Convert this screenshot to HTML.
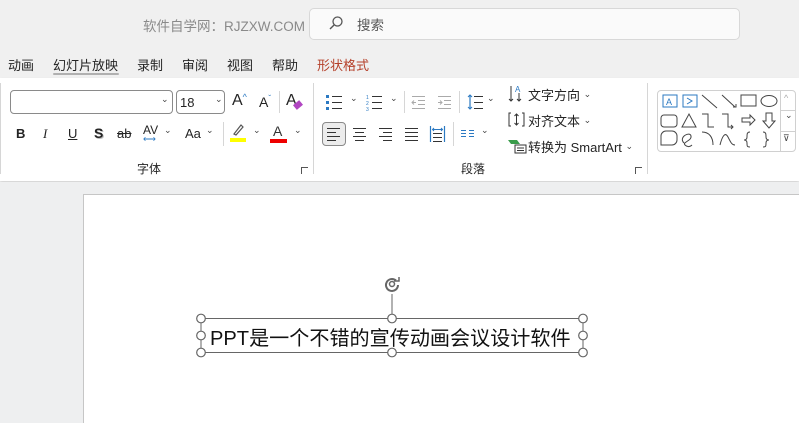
<!DOCTYPE html>
<html><head><meta charset="utf-8"><style>
*{margin:0;padding:0;box-sizing:border-box}
html,body{width:799px;height:423px;overflow:hidden}
body{background:#f0f0f0;font-family:"Liberation Sans","Noto Sans CJK SC",sans-serif;position:relative;color:#242424}
.a{position:absolute;white-space:nowrap}
.t{font-size:13px}
.sep{position:absolute;width:1px;background:#d6d6d6}
.chev{font-size:9px;color:#444;margin-top:-3px}
span.chev{position:relative;top:-3px}
</style></head><body>
<div class="a" style="left:143px;top:15px;font-size:13.5px;color:#8a8a8a">软件自学网：RJZXW.COM</div>
<div class="a" style="left:309px;top:8px;width:431px;height:32px;background:#fafafa;border:1px solid #d8d8d8;border-radius:5px"></div>
<svg class="a" style="left:328px;top:15px" width="16" height="16"><circle cx="9.5" cy="6.5" r="4.5" fill="none" stroke="#555" stroke-width="1.3"/><line x1="6.3" y1="9.7" x2="2" y2="14" stroke="#555" stroke-width="1.4"/></svg>
<div class="a" style="left:357px;top:14px;font-size:13.5px;color:#555">搜索</div>

<div class="a t" style="left:8px;top:55px">动画</div>
<div class="a t" style="left:53px;top:55px">幻灯片放映</div>
<div class="a" style="left:53px;top:73px;width:66px;height:2px;background:#b0b0b0;border-radius:1px"></div>
<div class="a t" style="left:137px;top:55px">录制</div>
<div class="a t" style="left:182px;top:55px">审阅</div>
<div class="a t" style="left:227px;top:55px">视图</div>
<div class="a t" style="left:272px;top:55px">帮助</div>
<div class="a t" style="left:317px;top:55px;color:#b5402a">形状格式</div>

<div class="a" style="left:0;top:78px;width:799px;height:103px;background:#fff;box-shadow:0 2px 3px rgba(0,0,0,0.12)"></div>
<div class="sep" style="left:313px;top:83px;height:91px"></div>
<div class="sep" style="left:0px;top:83px;height:91px"></div>
<div class="sep" style="left:647px;top:83px;height:91px"></div>

<div class="a" style="left:10px;top:90px;width:163px;height:24px;border:1px solid #8a8a8a;border-radius:4px"></div>
<div class="a chev" style="left:161px;top:97px">⌄</div>
<div class="a" style="left:176px;top:90px;width:49px;height:24px;border:1px solid #8a8a8a;border-radius:4px;font-size:13px;padding:4px 0 0 3px">18</div>
<div class="a chev" style="left:215px;top:97px">⌄</div>
<div class="a" style="left:232px;top:92px;font-size:16px">A<span style="font-size:9px;vertical-align:top;color:#2b79c2">^</span></div>
<div class="a" style="left:259px;top:94px;font-size:14px">A<span style="font-size:8px;vertical-align:top;color:#2b79c2">ˇ</span></div>
<div class="sep" style="left:279px;top:91px;height:22px"></div>
<div class="a" style="left:286px;top:92px;font-size:16px">A</div>
<div class="a" style="left:294px;top:102px;width:8px;height:6px;background:#b146c2;transform:rotate(-40deg)"></div>

<div class="a" style="left:16px;top:126px;font-size:13px;font-weight:bold">B</div>
<div class="a" style="left:43px;top:126px;font-size:13px;font-style:italic;font-family:'Liberation Serif',serif">I</div>
<div class="a" style="left:68px;top:126px;font-size:13px;text-decoration:underline">U</div>
<div class="a" style="left:94px;top:125px;font-size:14px;font-weight:bold;text-shadow:1px 1px #bbb">S</div>
<div class="a" style="left:117px;top:126px;font-size:13px;text-decoration:line-through">ab</div>
<div class="a" style="left:143px;top:123px;font-size:12px">AV</div>
<div class="a" style="left:143px;top:134px;font-size:9px;color:#2b79c2">⟷</div>
<div class="a chev" style="left:164px;top:128px">⌄</div>
<div class="a" style="left:185px;top:126px;font-size:13px">Aa</div>
<div class="a chev" style="left:206px;top:128px">⌄</div>
<div class="sep" style="left:223px;top:122px;height:24px"></div>
<svg class="a" style="left:230px;top:122px" width="16" height="20"><path d="M4 12 L11 3 L13 5 L6 13 Z" fill="none" stroke="#555" stroke-width="1.2"/><rect x="0" y="16" width="16" height="4" fill="#ffff00"/></svg>
<div class="a chev" style="left:253px;top:128px">⌄</div>
<div class="a" style="left:273px;top:123px;font-size:14px;color:#333">A</div>
<div class="a" style="left:270px;top:139px;width:17px;height:4px;background:#e00"></div>
<div class="a chev" style="left:294px;top:128px">⌄</div>
<div class="a" style="left:137px;top:160px;font-size:12px">字体</div>
<div class="a" style="left:301px;top:167px;width:7px;height:7px;border-left:1px solid #555;border-top:1px solid #555"></div>

<svg class="a" style="left:325px;top:93px" width="90" height="18">
<rect x="1" y="2" width="3" height="3" fill="#2b79c2"/><rect x="1" y="8" width="3" height="3" fill="#2b79c2"/><rect x="1" y="14" width="3" height="3" fill="#2b79c2"/>
<path d="M7 3.5h10M7 9.5h10M7 15.5h10" stroke="#333" stroke-width="1"/>
<text x="41" y="6" font-size="5" fill="#2b79c2">1</text><text x="41" y="12" font-size="5" fill="#2b79c2">2</text><text x="41" y="18" font-size="5" fill="#2b79c2">3</text>
<path d="M47 3.5h10M47 9.5h10M47 15.5h10" stroke="#333" stroke-width="1"/>
</svg>
<div class="a chev" style="left:350px;top:96px">⌄</div>
<div class="a chev" style="left:390px;top:96px">⌄</div>
<div class="sep" style="left:404px;top:91px;height:22px"></div>
<svg class="a" style="left:411px;top:93px" width="90" height="18">
<path d="M1 3.5h13M7 7.5h7M7 11.5h7M1 15.5h13M5 9.5H1M3 7.5l-2 2 2 2" stroke="#aaa" stroke-width="1" fill="none"/>
<path d="M27 3.5h13M33 7.5h7M33 11.5h7M27 15.5h13M27 9.5h4M29 7.5l2 2-2 2" stroke="#aaa" stroke-width="1" fill="none"/>
<path d="M59 2v14" stroke="#2b79c2" stroke-width="1.2"/><path d="M57 4l2-2 2 2M57 14l2 2 2-2" stroke="#2b79c2" fill="none"/>
<path d="M63 3.5h9M63 9.5h9M63 15.5h9" stroke="#333"/>
</svg>
<div class="sep" style="left:459px;top:91px;height:22px"></div>
<div class="a chev" style="left:487px;top:96px">⌄</div>
<div class="a" style="left:322px;top:122px;width:24px;height:24px;background:#ececec;border:1px solid #8a8a8a;border-radius:4px"></div>
<svg class="a" style="left:326px;top:126px" width="130" height="16">
<path d="M1 2.5h13M1 6.5h9M1 10.5h13M1 14.5h9" stroke="#333"/>
<path d="M27 2.5h13M29 6.5h9M27 10.5h13M29 14.5h9" stroke="#333"/>
<path d="M53 2.5h13M57 6.5h9M53 10.5h13M57 14.5h9" stroke="#333"/>
<path d="M79 2.5h13M79 6.5h13M79 10.5h13M79 14.5h13" stroke="#333"/>
<path d="M104.5 0v16M118.5 0v16" stroke="#2b79c2" stroke-width="1.2"/>
<path d="M107 3.5h9M108 2l-1.5 1.5 1.5 1.5M115 2l1.5 1.5-1.5 1.5" stroke="#2b79c2" fill="none"/>
<path d="M107 7.5h9M107 11.5h9M107 15.5h9" stroke="#333"/>
</svg>
<div class="sep" style="left:453px;top:122px;height:24px"></div>
<svg class="a" style="left:460px;top:129px" width="16" height="10"><path d="M1 1.5h5M1 4.5h5M1 7.5h5M9 1.5h5M9 4.5h5M9 7.5h5" stroke="#2b79c2"/></svg>
<div class="a chev" style="left:481px;top:128px">⌄</div>
<div class="a" style="left:461px;top:160px;font-size:12px">段落</div>
<div class="a" style="left:635px;top:167px;width:7px;height:7px;border-left:1px solid #555;border-top:1px solid #555"></div>

<svg class="a" style="left:508px;top:84px" width="18" height="20"><path d="M3 2v15M1 15l2 2 2-2M11 9v8M9 15l2 2 2-2" stroke="#333" fill="none"/><text x="7" y="8" font-size="8" fill="#2b79c2">A</text></svg>
<div class="a t" style="left:528px;top:85px">文字方向 <span class="chev">⌄</span></div>
<svg class="a" style="left:508px;top:111px" width="18" height="18"><path d="M3 2H1v13h2M14 2h2v13h-2M8.5 3v11M6.5 5l2-2 2 2M6.5 12l2 2 2-2" stroke="#333" fill="none"/></svg>
<div class="a t" style="left:528px;top:111px">对齐文本 <span class="chev">⌄</span></div>
<svg class="a" style="left:507px;top:138px" width="22" height="16"><path d="M1 2h9l3 4H4z" fill="#3a9c4b"/><rect x="8" y="7" width="11" height="8" fill="#fff" stroke="#333"/><path d="M10 10h7M10 12.5h7" stroke="#333"/></svg>
<div class="a t" style="left:528px;top:137px">转换为 SmartArt <span class="chev">⌄</span></div>

<div class="a" style="left:657px;top:90px;width:139px;height:62px;border:1px solid #d0d0d0;border-radius:4px"></div>
<div class="a" style="left:780px;top:90px;width:1px;height:62px;background:#d0d0d0"></div>
<div class="a" style="left:780px;top:110px;width:16px;height:1px;background:#d0d0d0"></div>
<div class="a" style="left:780px;top:131px;width:16px;height:1px;background:#d0d0d0"></div>
<svg class="a" style="left:658px;top:91px" width="138" height="60" fill="none" stroke="#444" stroke-width="1">
<rect x="5" y="4" width="14" height="12" stroke="#2b79c2"/><text x="8" y="14" font-size="9" fill="#2b79c2" stroke="none">A</text>
<rect x="25" y="4" width="14" height="12" stroke="#2b79c2"/><path d="M29 7l5 3-5 3" stroke="#2b79c2"/>
<path d="M44 4l15 13M64 4l13 12M75 16h3v-3"/>
<rect x="83" y="4" width="15" height="11"/><ellipse cx="111" cy="10" rx="8" ry="5.5"/>
<rect x="3" y="24" width="16" height="12" rx="3"/><path d="M24 36l7-13 7 13z"/>
<path d="M44 23h6v13h6M64 23h6v13h5M73 34l2 2-2 2"/><path d="M84 27h8v-3l5 5-5 5v-3h-8z"/><path d="M108 22h6v8h3l-6 7-6-7h3z"/>
<path d="M3 54V45a5 5 0 0 1 5-5h6a5 5 0 0 1 5 5v4a5 5 0 0 1-5 5z"/><path d="M26 52c-6-6 6-12 7-7s-9 6-6 9 6 1 7 0"/>
<path d="M44 41c7 0 11 5 11 13M62 54c2-8 5-14 8-8s4 8 7 8M92 41c-3 0-3 2-3 5s-2 3-3 3c1 0 3 0 3 3s0 4 3 4M105 41c3 0 3 2 3 5s2 3 3 3c-1 0-3 0-3 3s0 4-3 4"/>
</svg>
<div class="a" style="left:784px;top:93px;font-size:9px;color:#aaa">^</div>
<div class="a chev" style="left:785px;top:113px">⌄</div>
<div class="a" style="left:783px;top:133px;font-size:9px;color:#444">⊽</div>

<div class="a" style="left:0;top:182px;width:799px;height:241px;background:#eeeff0"></div>
<div class="a" style="left:83px;top:194px;width:716px;height:229px;background:#fff;border-left:1px solid #c6c6c6;border-top:1px solid #c6c6c6"></div>

<svg class="a" style="left:190px;top:272px" width="410" height="90">
<rect x="11" y="46.5" width="382" height="34" fill="none" stroke="#666" stroke-width="1"/>
<line x1="202" y1="22" x2="202" y2="46" stroke="#666"/>
<path d="M208 13a6 6 0 1 1-2-4.5" fill="none" stroke="#666" stroke-width="2"/><circle cx="202" cy="12" r="2.5" fill="none" stroke="#666" stroke-width="1.5"/><path d="M204 9h5v-4" fill="none" stroke="#666" stroke-width="1.5"/>
<g fill="#fff" stroke="#666" stroke-width="1.2">
<circle cx="11" cy="46.5" r="4.3"/><circle cx="202" cy="46.5" r="4.3"/><circle cx="393" cy="46.5" r="4.3"/>
<circle cx="11" cy="63.5" r="4.3"/><circle cx="393" cy="63.5" r="4.3"/>
<circle cx="11" cy="80.5" r="4.3"/><circle cx="202" cy="80.5" r="4.3"/><circle cx="393" cy="80.5" r="4.3"/>
</g>
</svg>
<div class="a" style="left:210px;top:322px;font-size:20.1px;color:#111">PPT是一个不错的宣传动画会议设计软件</div>
</body></html>
